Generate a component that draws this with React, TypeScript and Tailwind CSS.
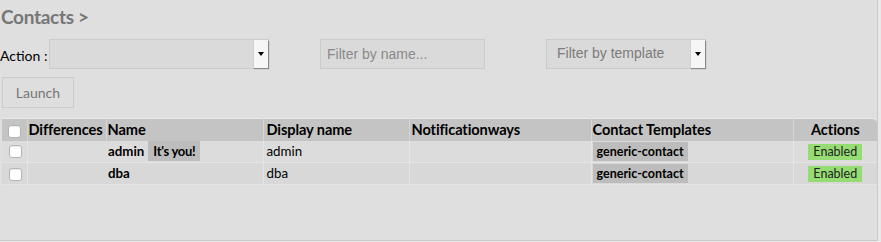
import React from 'react';

interface Contact {
  name: string;
  displayName: string;
  notificationways: string;
  template: string;
  isMe?: boolean;
}

const contacts: Contact[] = [
  { name: 'admin', displayName: 'admin', notificationways: '', template: 'generic-contact', isMe: true },
  { name: 'dba', displayName: 'dba', notificationways: '', template: 'generic-contact' },
];

const Checkbox: React.FC = () => (
  <span className="inline-block w-[13px] h-[13px] rounded-[3px] bg-white border border-[#b5b5b5] shadow-[inset_0_1px_1px_rgba(0,0,0,0.08)]" />
);

// fake select with the little arrow button on the right
const SelectBox: React.FC<{ label?: string; className: string }> = ({ label, className }) => (
  <div className={`flex h-[30px] border border-[#cbcbcb] bg-[#dadada] ${className}`}>
    <div className="flex-1 flex items-center pl-[10px] text-[14px] text-[#7b7b7b] font-['Liberation_Sans',Arial,sans-serif]">
      {label}
    </div>
    <div className="w-[15px] flex items-center justify-center bg-[#f6f6f6] border-l border-[#d0d0d0] shadow-[1px_1px_1px_#8a8a8a]">
      <span className="w-0 h-0 border-l-[3px] border-r-[3px] border-t-[4px] border-l-transparent border-r-transparent border-t-black" />
    </div>
  </div>
);

export default function App() {
  return (
    <div className="w-[881px] h-[242px] bg-[#e8e8e8] font-['Lato',sans-serif] text-black">
      <div className="w-[878px] h-[241px] bg-[#dfdfdf] border-r border-b border-[#c9c9c9] overflow-hidden">
        <h1 className="pt-[5px] pl-[1px] h-[30px] text-[19px] font-bold text-[#777777] leading-[24px] tracking-[-0.3px]">
          Contacts &gt;
        </h1>

        <div className="flex items-center h-[31px] mt-[8px]">
          <span className="text-[14px] w-[49px] mt-[3px]">Action :</span>
          <SelectBox className="w-[220px]" />
          <input
            placeholder="Filter by name..."
            className="ml-[51px] w-[165px] h-[30px] border border-[#cbcbcb] bg-[#dadada] pl-[6px] text-[14px] font-['Liberation_Sans',Arial,sans-serif] placeholder:text-[#8a8a8a] outline-none"
          />
          <SelectBox label="Filter by template" className="ml-[61px] w-[160px]" />
        </div>

        <button className="ml-[2px] mt-[8px] w-[72px] h-[31px] border border-[#cbcbcb] bg-[#dedede] text-[14px] text-[#777777]">
          Launch
        </button>

        <table className="mt-[10px] ml-[2px] w-[875px] border-collapse table-fixed border-t border-[#e9e9e9] text-[13.3px]">
          <colgroup>
            <col className="w-[25px]" />
            <col className="w-[79px]" />
            <col className="w-[157px]" />
            <col className="w-[146px]" />
            <col className="w-[182px]" />
            <col className="w-[202px]" />
            <col />
          </colgroup>
          <thead>
            <tr className="h-[22px] bg-[#c4c4c4] font-bold text-left text-[14.6px] tracking-[-0.1px]">
              <th className="pl-[6px] align-bottom leading-none"><Checkbox /></th>
              <th className="pl-[1px] border-l border-[#d6d6d6] whitespace-nowrap">Differences</th>
              <th className="pl-[1px] border-l border-[#d6d6d6]">Name</th>
              <th className="pl-[3px] border-l border-[#d6d6d6]">Display name</th>
              <th className="pl-[2px] border-l border-[#d6d6d6]">Notificationways</th>
              <th className="pl-[1px] border-l border-[#d6d6d6]">Contact Templates</th>
              <th className="text-center border-l border-[#d6d6d6] rounded-tr-[5px]">Actions</th>
            </tr>
          </thead>
          <tbody>
            {contacts.map((c, i) => (
              <tr
                key={c.name}
                className={`h-[22px] border-b border-[#e4e4e4] ${i % 2 === 0 ? 'bg-[#dcdcdc]' : 'bg-[#d8d8d8]'}`}
              >
                <td className="pl-[7px] pt-[3px] leading-none"><Checkbox /></td>
                <td className="border-l border-[#e4e4e4]" />
                <td className="pl-[2px] border-r border-[#e4e4e4] whitespace-nowrap">
                  <span className="font-bold">{c.name}</span>
                  {c.isMe && (
                    <span className="ml-[4px] px-[5px] py-[2px] bg-[#bdbdbd] text-[13px] font-bold tracking-[-0.3px]">It's you!</span>
                  )}
                </td>
                <td className="pl-[3px]">{c.displayName}</td>
                <td className="border-l border-[#e4e4e4]">{c.notificationways}</td>
                <td className="pl-[1px] border-l border-[#e4e4e4]">
                  <span className="px-[4px] py-[2px] bg-[#bdbdbd] text-[12.5px] font-bold">{c.template}</span>
                </td>
                <td className="text-center border-l border-[#e4e4e4]">
                  <span className="inline-block px-[5px] leading-[16px] bg-[#95dd73] text-[12.5px] text-[#222]">Enabled</span>
                </td>
              </tr>
            ))}
          </tbody>
        </table>
      </div>
    </div>
  );
}
